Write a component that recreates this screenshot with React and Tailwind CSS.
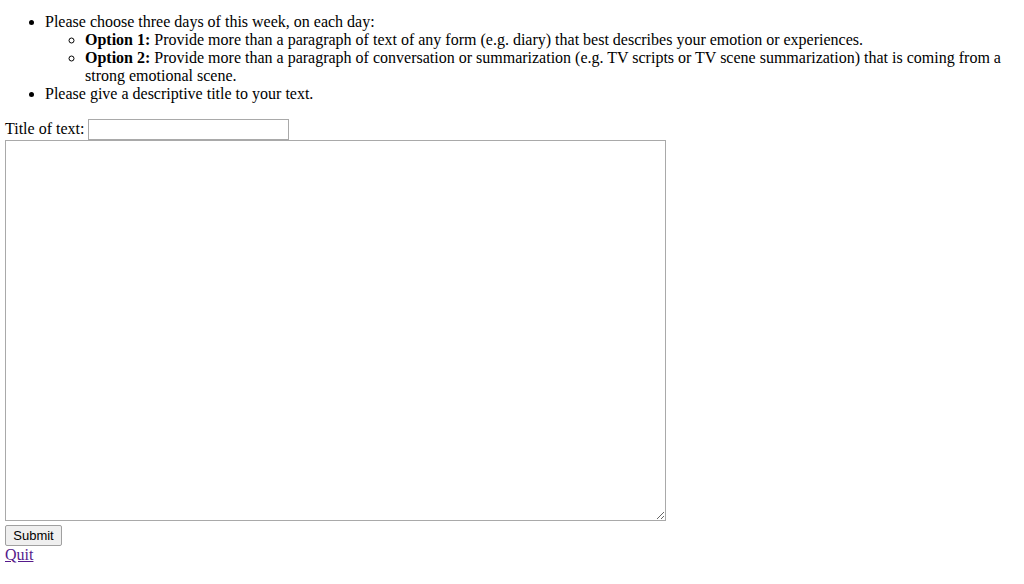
export default function App() {
  return (
    <div className="min-h-[584px] bg-white pl-[5px] pr-[5px] text-[16px] leading-[18px] text-black" style={{ fontFamily: '"Liberation Serif", "Times New Roman", serif' }}>
      <ul className="mt-[13px] mb-[16px] list-disc pl-[40px]">
        <li>
          Please choose three days of this week, on each day:
          <ul className="list-[circle] pl-[40px]">
            <li>
              <b className="font-bold">Option 1:</b> Provide more than a paragraph of text of any form (e.g. diary) that best describes your emotion or experiences.
            </li>
            <li>
              <b className="font-bold">Option 2:</b> Provide more than a paragraph of conversation or summarization (e.g. TV scripts or TV scene summarization) that is coming from a strong emotional scene.
            </li>
          </ul>
        </li>
        <li>Please give a descriptive title to your text.</li>
      </ul>
      <div className="flex h-[21px] items-start">
        <span className="mt-[1px]">Title of text:</span>
        <input type="text" className="ml-[4px] h-[21px] w-[201px] border border-[#a9a9a9] bg-white px-[2px] text-[13px] outline-none" />
      </div>
      <textarea className="block h-[381px] w-[661px] resize border border-[#a9a9a9] bg-white p-[2px] text-[13px] outline-none" style={{ fontFamily: '"Liberation Mono", monospace' }} />
      <button className="mt-[4px] block h-[21px] w-[57px] rounded-[2px] border border-[#a0a0a0] bg-[#efefef] text-[13px] leading-[19px] text-black" style={{ fontFamily: '"Liberation Sans", Arial, sans-serif' }}>
        Submit
      </button>
      <a href="#" className="text-[#551a8b] underline">Quit</a>
    </div>
  );
}
